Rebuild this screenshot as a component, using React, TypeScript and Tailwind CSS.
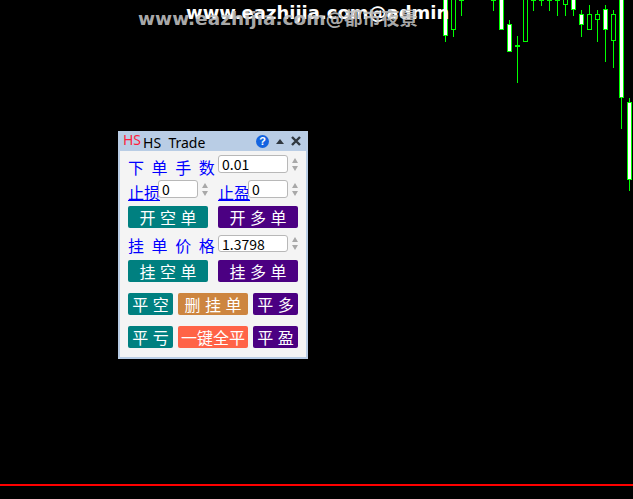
const cjk = 'font-["Noto_Sans_CJK_SC","Liberation_Sans",sans-serif]';

// [x, wickTop, wickBottom, bodyTop, bodyBottom, filled]
const candles: [number, number, number, number, number, boolean][] = [
  [445.5, 0, 42, 0, 36, true],
  [453.5, 0, 37, 0, 30, false],
  [461.5, 0, 16, 0, 0, false],
  [493.5, 0, 11, 0, 0, false],
  [501.5, 0, 30, 0, 30, true],
  [509.5, 20, 52, 25, 52, true],
  [517.5, 36, 83, 46, 46, false],
  [525.5, 0, 42, 0, 42, false],
  [533.5, 0, 11, 0, 0, false],
  [541.5, 0, 6, 0, 0, false],
  [549.5, 0, 11, 0, 0, false],
  [557.5, 0, 16, 0, 0, false],
  [565.5, 0, 16, 0, 5, false],
  [573.5, 0, 16, 0, 10, true],
  [581.5, 10, 37, 15, 25, true],
  [589.5, 5, 30, 15, 30, false],
  [597.5, 10, 42, 15, 20, false],
  [605.5, 5, 62, 10, 30, true],
  [613.5, 10, 68, 15, 41, false],
  [621.5, 0, 129, 0, 98, true],
  [629.5, 98, 191, 103, 180, true],
];

function Chart() {
  return (
    <svg className="absolute left-0 top-0" width="633" height="499" shapeRendering="crispEdges">
      {candles.map(([x, wt, wb, bt, bb, filled], i) => (
        <g key={i}>
          <line x1={x} x2={x} y1={wt} y2={wb} stroke="#00ff00" />
          <rect x={x - 2} y={bt - 0.5} width={4} height={Math.max(bb - bt, 0.5)} fill={filled ? '#ffffff' : '#000000'} stroke="#00ff00" />
        </g>
      ))}
    </svg>
  );
}

function Spinner() {
  return (
    <div className="ml-[4px] flex w-[7px] shrink-0 flex-col gap-[3px]">
      <div className="h-0 w-0 border-x-[3.5px] border-b-[5px] border-x-transparent border-b-[#a8a8a8]" />
      <div className="h-0 w-0 border-x-[3.5px] border-t-[5px] border-x-transparent border-t-[#a8a8a8]" />
    </div>
  );
}

function Field({ value, w, h = 'h-[18px]' }: { value: string; w: string; h?: string }) {
  return (
    <div className={`relative flex shrink-0 items-center rounded-[3px] border border-[#b8b8b8] bg-white pl-[3px] text-[14px] leading-none text-black ${h} ${w}`}>
      {value}
    </div>
  );
}

function Btn({ label, color, w }: { label: string; color: string; w: string }) {
  return (
    <div className={`flex h-[22px] shrink-0 items-center justify-center whitespace-pre rounded-[2px] text-[16px] leading-none text-white [word-spacing:1px] ${color} ${w}`}>
      {label}
    </div>
  );
}

function Panel() {
  return (
    <div className={`absolute left-[118px] top-[131px] flex h-[228px] w-[190px] flex-col border-x-[2px] border-b-[2px] border-[#b9cde5] bg-[#f4f4f4] ${cjk}`}>
      <div className="-mx-[2px] flex h-[20px] shrink-0 items-center justify-between bg-[#b9cde5] pl-[5px] pr-[7px]">
        <div className="flex items-center">
          <span className="mb-[3px] font-['Noto_Sans'] text-[14px] leading-none text-[#ff1e3c]">HS</span>
          <span className="ml-[2px] mt-[4px] whitespace-pre font-['Noto_Sans'] text-[14px] leading-none text-black">HS  Trade</span>
        </div>
        <div className="flex items-center gap-[7px]">
          <span className="flex h-[13px] w-[13px] items-center justify-center rounded-full bg-[#1464e0] font-['Liberation_Sans'] text-[11px] font-bold leading-none text-white">?</span>
          <div className="h-0 w-0 border-x-[4px] border-b-[5px] border-x-transparent border-b-[#303840]" />
          <svg width="10" height="10" viewBox="0 0 10 10">
            <path d="M1 1 9 9M9 1 1 9" stroke="#303840" strokeWidth="2.4" />
          </svg>
        </div>
      </div>

      <div className="flex flex-col pl-[8px]">
        <div className="mt-[4px] flex h-[18px] items-center">
          <span className="mt-[6px] w-[90px] shrink-0 whitespace-pre text-[16px] leading-none text-[#0000ff] [word-spacing:4px]">下 单 手 数</span>
          <Field value="0.01" w="w-[70px]" />
          <Spinner />
        </div>
        <div className="mt-[7px] flex h-[18px] items-center">
          <span className="mt-[6px] w-[30px] shrink-0 whitespace-nowrap text-[16px] leading-none text-[#0000ff] underline">止损</span>
          <Field value="0" w="w-[40px]" />
          <Spinner />
          <span className="ml-[9px] mt-[6px] w-[30px] shrink-0 whitespace-nowrap text-[16px] leading-none text-[#0000ff] underline">止盈</span>
          <Field value="0" w="w-[40px]" />
          <Spinner />
        </div>
        <div className="mt-[8px] flex gap-[10px]">
          <Btn label="开 空 单" color="bg-[#008080]" w="w-[80px]" />
          <Btn label="开 多 单" color="bg-[#4b0082]" w="w-[80px]" />
        </div>
        <div className="mt-[7px] flex h-[17px] items-center">
          <span className="mt-[3px] w-[90px] shrink-0 whitespace-pre text-[16px] leading-none text-[#0000ff] [word-spacing:4px]">挂 单 价 格</span>
          <Field value="1.3798" w="w-[70px]" h="h-[17px]" />
          <Spinner />
        </div>
        <div className="mt-[8px] flex gap-[10px]">
          <Btn label="挂 空 单" color="bg-[#008080]" w="w-[80px]" />
          <Btn label="挂 多 单" color="bg-[#4b0082]" w="w-[80px]" />
        </div>
        <div className="mt-[11px] flex gap-[5px]">
          <Btn label="平 空" color="bg-[#008080]" w="w-[45px]" />
          <Btn label="删 挂 单" color="bg-[#cd853f]" w="w-[70px]" />
          <Btn label="平 多" color="bg-[#4b0082]" w="w-[45px]" />
        </div>
        <div className="mt-[11px] flex gap-[5px]">
          <Btn label="平 亏" color="bg-[#008080]" w="w-[45px]" />
          <Btn label="一键全平" color="bg-[#ff6347]" w="w-[70px]" />
          <Btn label="平 盈" color="bg-[#4b0082]" w="w-[45px]" />
        </div>
      </div>
    </div>
  );
}

export default function App() {
  return (
    <div className="relative h-[499px] w-[633px] overflow-hidden bg-black">
      <Chart />
      <div className="absolute left-[186px] top-0 whitespace-nowrap font-['DejaVu_Sans'] text-[18px] font-bold leading-[26px] text-white">www.eazhijia.com@admin</div>
      <div className={`absolute left-[138px] top-[6px] whitespace-nowrap font-["DejaVu_Sans","Noto_Sans_CJK_SC",sans-serif] text-[18.5px] font-bold leading-[26px] text-[#c0c0c0]/90`}>www.eazhijia.com@都市夜景</div>
      <Panel />
      <div className="absolute left-0 top-[484px] h-[2px] w-full bg-[#ff0000]" />
    </div>
  );
}
